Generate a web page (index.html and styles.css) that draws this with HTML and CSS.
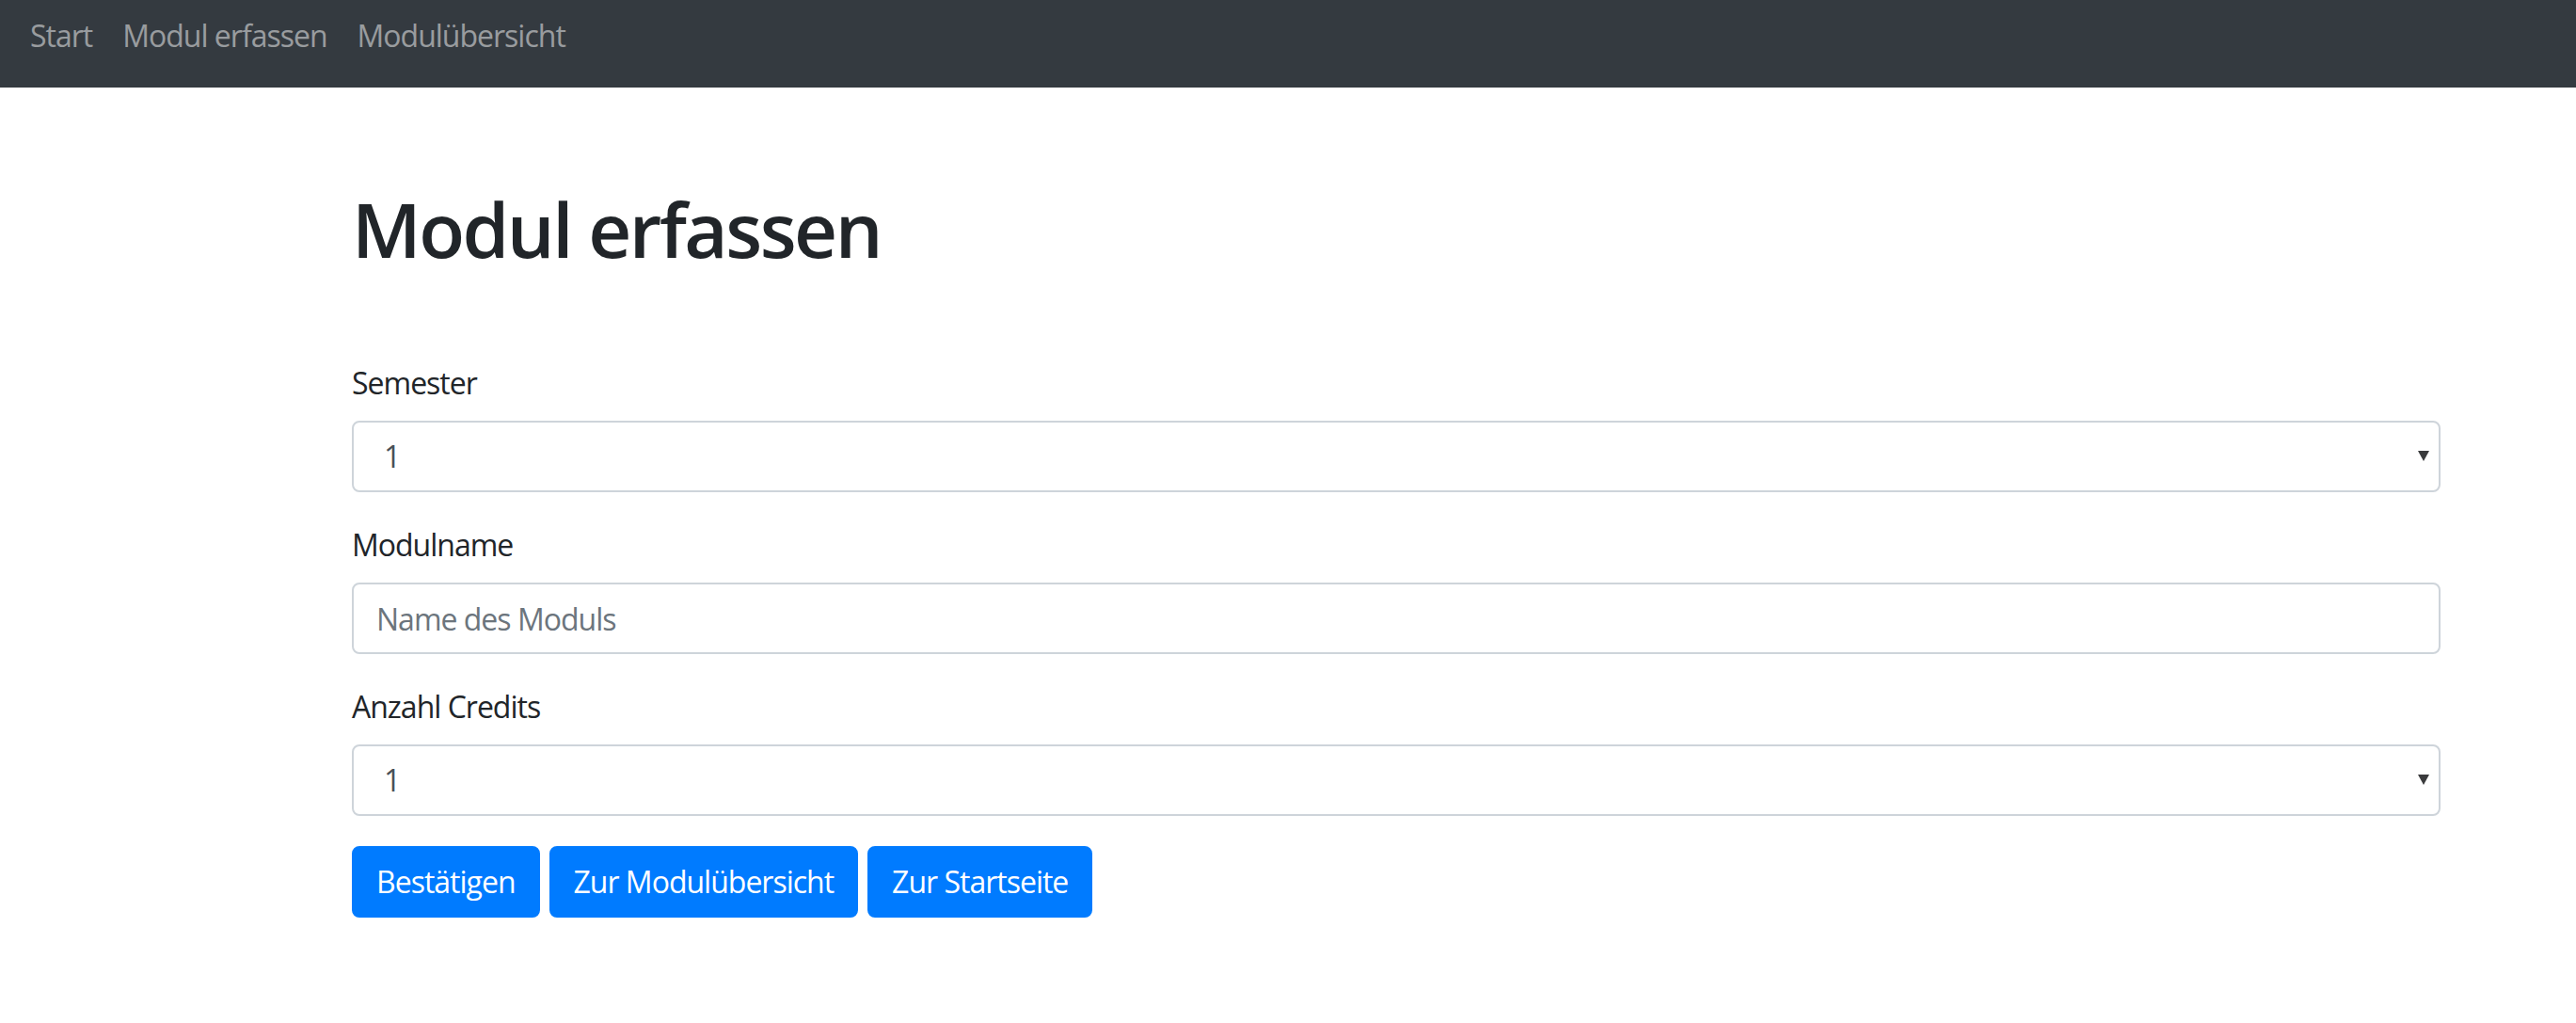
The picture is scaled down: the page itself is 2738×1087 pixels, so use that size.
FILE: index.html
```html
<!DOCTYPE html>
<html lang="de">
<head>
<meta charset="utf-8">
<title>Modul erfassen</title>
<link rel="stylesheet" href="styles.css">
</head>
<body>
<nav class="navbar">
  <a class="nav-link" href="#">Start</a>
  <a class="nav-link" href="#">Modul erfassen</a>
  <a class="nav-link" href="#">Modulübersicht</a>
</nav>
<main class="container">
  <h1 class="title">Modul erfassen</h1>
  <form class="form">
    <div class="form-group">
      <label class="label" for="semester">Semester</label>
      <div class="select-wrap">
        <select class="control select" id="semester">
          <option>1</option>
          <option>2</option>
        </select>
      </div>
    </div>
    <div class="form-group">
      <label class="label" for="name">Modulname</label>
      <input class="control" id="name" type="text" placeholder="Name des Moduls">
    </div>
    <div class="form-group">
      <label class="label" for="credits">Anzahl Credits</label>
      <div class="select-wrap">
        <select class="control select" id="credits">
          <option>1</option>
          <option>2</option>
        </select>
      </div>
    </div>
    <div class="buttons">
      <button type="button" class="btn">Bestätigen</button>
      <button type="button" class="btn">Zur Modulübersicht</button>
      <button type="button" class="btn">Zur Startseite</button>
    </div>
  </form>
</main>
</body>
</html>
```

FILE: styles.css
```css
html, body {
  margin: 0;
  padding: 0;
}
body {
  font-family: "Open Sans", "Noto Sans", sans-serif;
  font-size: 32px;
  line-height: 48px;
  letter-spacing: -1px;
  color: #212529;
  background: #fff;
}
.navbar {
  box-sizing: border-box;
  height: 93px;
  background: #343a40;
  display: flex;
  align-items: flex-start;
  padding: 14px 16px 0;
}
.nav-link {
  display: block;
  padding: 0 16px;
  line-height: 48px;
  color: rgba(255, 255, 255, 0.5);
  text-decoration: none;
}
.container {
  width: 2220px;
  margin-left: 374px;
  padding-top: 102px;
}
.title {
  margin: 0;
  font-size: 80px;
  line-height: 96px;
  font-weight: 600;
  letter-spacing: -2.5px;
}
.form {
  margin-top: 92px;
}
.form-group {
  margin-bottom: 32px;
}
.label {
  display: block;
  margin-bottom: 16px;
}
.control {
  display: block;
  box-sizing: border-box;
  width: 100%;
  height: 76px;
  padding: 12px 24px;
  font-family: inherit;
  font-size: 32px;
  line-height: 48px;
  letter-spacing: -1px;
  color: #495057;
  background: #fff;
  border: 2px solid #ced4da;
  border-radius: 8px;
  outline: none;
}
.control::placeholder {
  color: #6c757d;
  opacity: 1;
}
.select-wrap {
  position: relative;
}
.select {
  appearance: none;
  -webkit-appearance: none;
  padding-left: 32px;
}
.select-wrap::after {
  content: "";
  position: absolute;
  right: 12px;
  top: 32px;
  width: 0;
  height: 0;
  border-left: 6px solid transparent;
  border-right: 6px solid transparent;
  border-top: 11px solid #3a3b3d;
  pointer-events: none;
}
.buttons {
  display: flex;
  gap: 10px;
}
.btn {
  box-sizing: border-box;
  height: 76px;
  padding: 12px 24px;
  font-family: inherit;
  font-size: 32px;
  line-height: 48px;
  letter-spacing: -1px;
  color: #fff;
  background: #007bff;
  border: 2px solid #007bff;
  border-radius: 8px;
  cursor: pointer;
}
```
